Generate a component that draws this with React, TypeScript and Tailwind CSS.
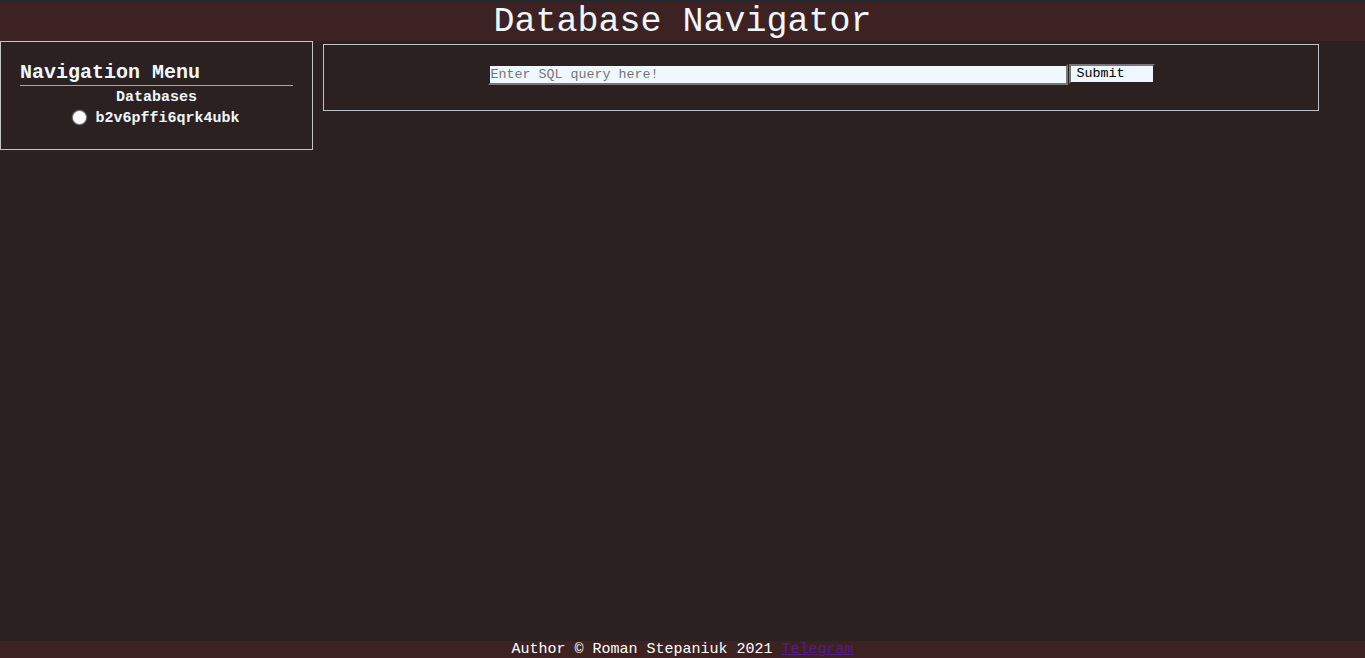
export default function App() {
  return (
    <div
      className="h-screen flex flex-col bg-[#2b2121] text-[#f0f8ff] overflow-hidden"
      style={{ fontFamily: '"Liberation Mono", "Courier New", monospace' }}
    >
      {/* Header */}
      <header className="h-[41px] shrink-0 bg-[#3d2224] border-t border-[#1e2b31] flex items-start justify-center">
        <h1 className="text-[35px] leading-[38px] font-normal mt-[2px]">Database Navigator</h1>
      </header>

      <div className="flex items-start">
        {/* Navigation */}
        <nav className="w-[313px] h-[109px] border border-[#c4c4c4] px-[19px] pt-[20px]">
          <h2 className="text-[20px] leading-[22px] font-bold border-b border-[#a9a9a9] pb-[1px]">
            Navigation Menu
          </h2>
          <div className="flex flex-col items-center">
            <h3 className="text-[15px] leading-[19px] font-bold mt-[2px]">Databases</h3>
            <label className="flex items-center gap-[9px] mt-[3px] text-[15px] leading-[18px] font-bold">
              <span className="w-[13px] h-[13px] rounded-full bg-white inline-block -mt-[3px] shadow-[0_0_1px_1px_#8a8a8a]" />
              b2v6pffi6qrk4ubk
            </label>
          </div>
        </nav>

        {/* Query form */}
        <main className="ml-[10px] mt-[3px] w-[996px] h-[67px] border border-[#c0c4c8] flex justify-center pt-[19px]">
          <form className="flex items-start" onSubmit={(e) => e.preventDefault()}>
            <input
              type="text"
              placeholder="Enter SQL query here!"
              className="w-[580px] h-[21px] bg-[#f0f8ff] border-2 border-t-[#2b2121] border-l-[#2b2121] border-b-[#777777] border-r-[#777777] px-[1px] text-[13.33px] leading-[16px] text-black placeholder:text-[#757575] outline-none"
            />
            <button
              type="submit"
              className="w-[86px] h-[20px] ml-[1px] bg-[#f0f8ff] border-2 border-t-[#777777] border-l-[#777777] border-b-[#2b2121] border-r-[#2b2121] text-left pl-[6px] text-[13.33px] leading-[14px] text-black"
            >
              Submit
            </button>
          </form>
        </main>
      </div>

      {/* Footer */}
      <footer className="mt-auto h-[17px] shrink-0 bg-[#3d2224] flex justify-center text-[15px] leading-[17px] text-white">
        <span>
          Author © Roman Stepaniuk 2021{" "}
          <a href="#" className="text-[#551a8b] underline">
            Telegram
          </a>
        </span>
      </footer>
    </div>
  );
}
